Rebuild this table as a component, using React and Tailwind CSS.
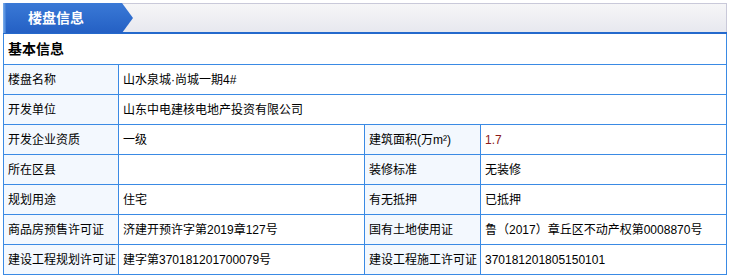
import React from "react";

const font = { fontFamily: '"Liberation Sans","Noto Sans CJK SC",sans-serif' };

function Label({ children }) {
  return (
    <div className="bg-[#f3f8fe] h-[29px] flex items-center pl-[4px] text-[12px] text-black whitespace-nowrap">
      {children}
    </div>
  );
}

function Value({ children, span, className = "" }) {
  return (
    <div
      className={`bg-white h-[29px] flex items-center pl-[4px] text-[12px] text-black whitespace-nowrap ${
        span ? "col-span-3" : ""
      } ${className}`}
    >
      {children}
    </div>
  );
}

export default function App() {
  return (
    <div className="w-[730px] h-[279px] bg-white pt-[3px] px-[3px]" style={font}>
      <div className="relative flex h-[29px] border-t border-r border-[#c9c9d9] bg-gradient-to-b from-[#f6f6f7] to-[#e7e8ef]">
        <div className="-mt-px h-[30px] w-[131px] bg-gradient-to-b from-[#3a79d6] to-[#2460c4] [clip-path:polygon(0_0,119px_0,130px_50%,119px_100%,0_100%)] flex items-center">
          <div className="h-full w-[3px] bg-gradient-to-r from-[#7fb0ea] to-[#3a79d6]" />
          <span className="ml-[22px] text-[14px] font-bold text-white leading-none">楼盘信息</span>
        </div>
      </div>
      <div className="h-[2px] bg-[#2469cc]" />
      <div className="grid grid-cols-[114px_245px_115px_245px] gap-px bg-[#3a8ae4] border-x border-b border-[#3a8ae4]">
        <div className="col-span-4 bg-white h-[30px] flex items-center pl-[4px] text-[14px] font-bold text-black">
          基本信息
        </div>
        <Label>楼盘名称</Label>
        <Value span>山水泉城·尚城一期4#</Value>
        <Label>开发单位</Label>
        <Value span>山东中电建核电地产投资有限公司</Value>
        <Label>开发企业资质</Label>
        <Value>一级</Value>
        <Label>建筑面积(万m²)</Label>
        <Value className="!text-[#8b1a1a]">1.7</Value>
        <Label>所在区县</Label>
        <Value></Value>
        <Label>装修标准</Label>
        <Value>无装修</Value>
        <Label>规划用途</Label>
        <Value>住宅</Value>
        <Label>有无抵押</Label>
        <Value>已抵押</Value>
        <Label>商品房预售许可证</Label>
        <Value>济建开预许字第2019章127号</Value>
        <Label>国有土地使用证</Label>
        <Value>鲁（2017）章丘区不动产权第0008870号</Value>
        <Label>建设工程规划许可证</Label>
        <Value>建字第370181201700079号</Value>
        <Label>建设工程施工许可证</Label>
        <Value>370181201805150101</Value>
      </div>
    </div>
  );
}
